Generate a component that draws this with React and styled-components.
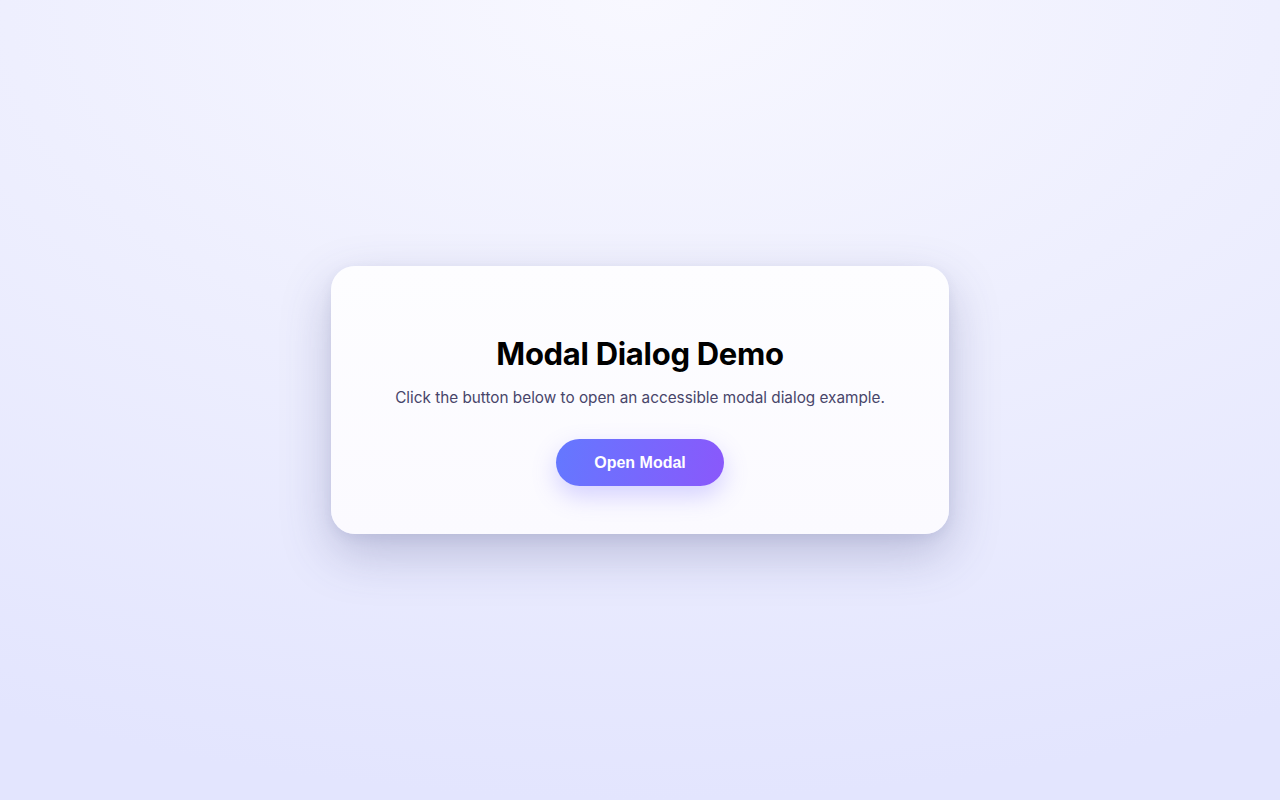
import React from "react";
import styled, { createGlobalStyle } from "styled-components";

const GlobalStyle = createGlobalStyle`
  html, body {
    margin: 0;
    padding: 0;
    height: 100%;
  }
  body {
    font-family: Inter, "Noto Sans", sans-serif;
    background: radial-gradient(
      ellipse 110% 100% at 50% 0%,
      #f8f8ff 0%,
      #eeeffe 45%,
      #e3e5fe 100%
    );
    background-attachment: fixed;
  }
  #root {
    height: 100%;
  }
`;

const Page = styled.main`
  height: 100vh;
  display: flex;
  align-items: center;
  justify-content: center;
`;

const Card = styled.section`
  width: 618px;
  box-sizing: border-box;
  padding: 69px 40px 48px;
  border-radius: 24px;
  background: linear-gradient(180deg, #fdfdff 0%, #fbfaff 100%);
  box-shadow: 0 20px 50px rgba(70, 72, 130, 0.28), 0 4px 12px rgba(70, 72, 130, 0.08);
  display: flex;
  flex-direction: column;
  align-items: center;
  text-align: center;
`;

const Title = styled.h1`
  margin: 0;
  font-size: 31px;
  line-height: 38px;
  font-weight: 700;
  color: #000;
  letter-spacing: -0.3px;
`;

const Lead = styled.p`
  margin: 13px 0 0;
  font-size: 15.3px;
  line-height: 24px;
  color: #48456a;
`;

const Button = styled.button`
  margin-top: 29px;
  height: 47px;
  padding: 0 38px;
  border: none;
  border-radius: 999px;
  background: linear-gradient(100deg, #6478ff 0%, #8a58fb 100%);
  color: #fff;
  font-family: "Liberation Sans", Arial, sans-serif;
  font-size: 16px;
  font-weight: 700;
  cursor: pointer;
  box-shadow: 0 10px 24px rgba(110, 100, 255, 0.28);
`;

export default function App() {
  return (
    <>
      <GlobalStyle />
      <Page>
        <Card role="region" aria-label="Modal demo">
          <Title>Modal Dialog Demo</Title>
          <Lead>Click the button below to open an accessible modal dialog example.</Lead>
          <Button type="button">Open Modal</Button>
        </Card>
      </Page>
    </>
  );
}
